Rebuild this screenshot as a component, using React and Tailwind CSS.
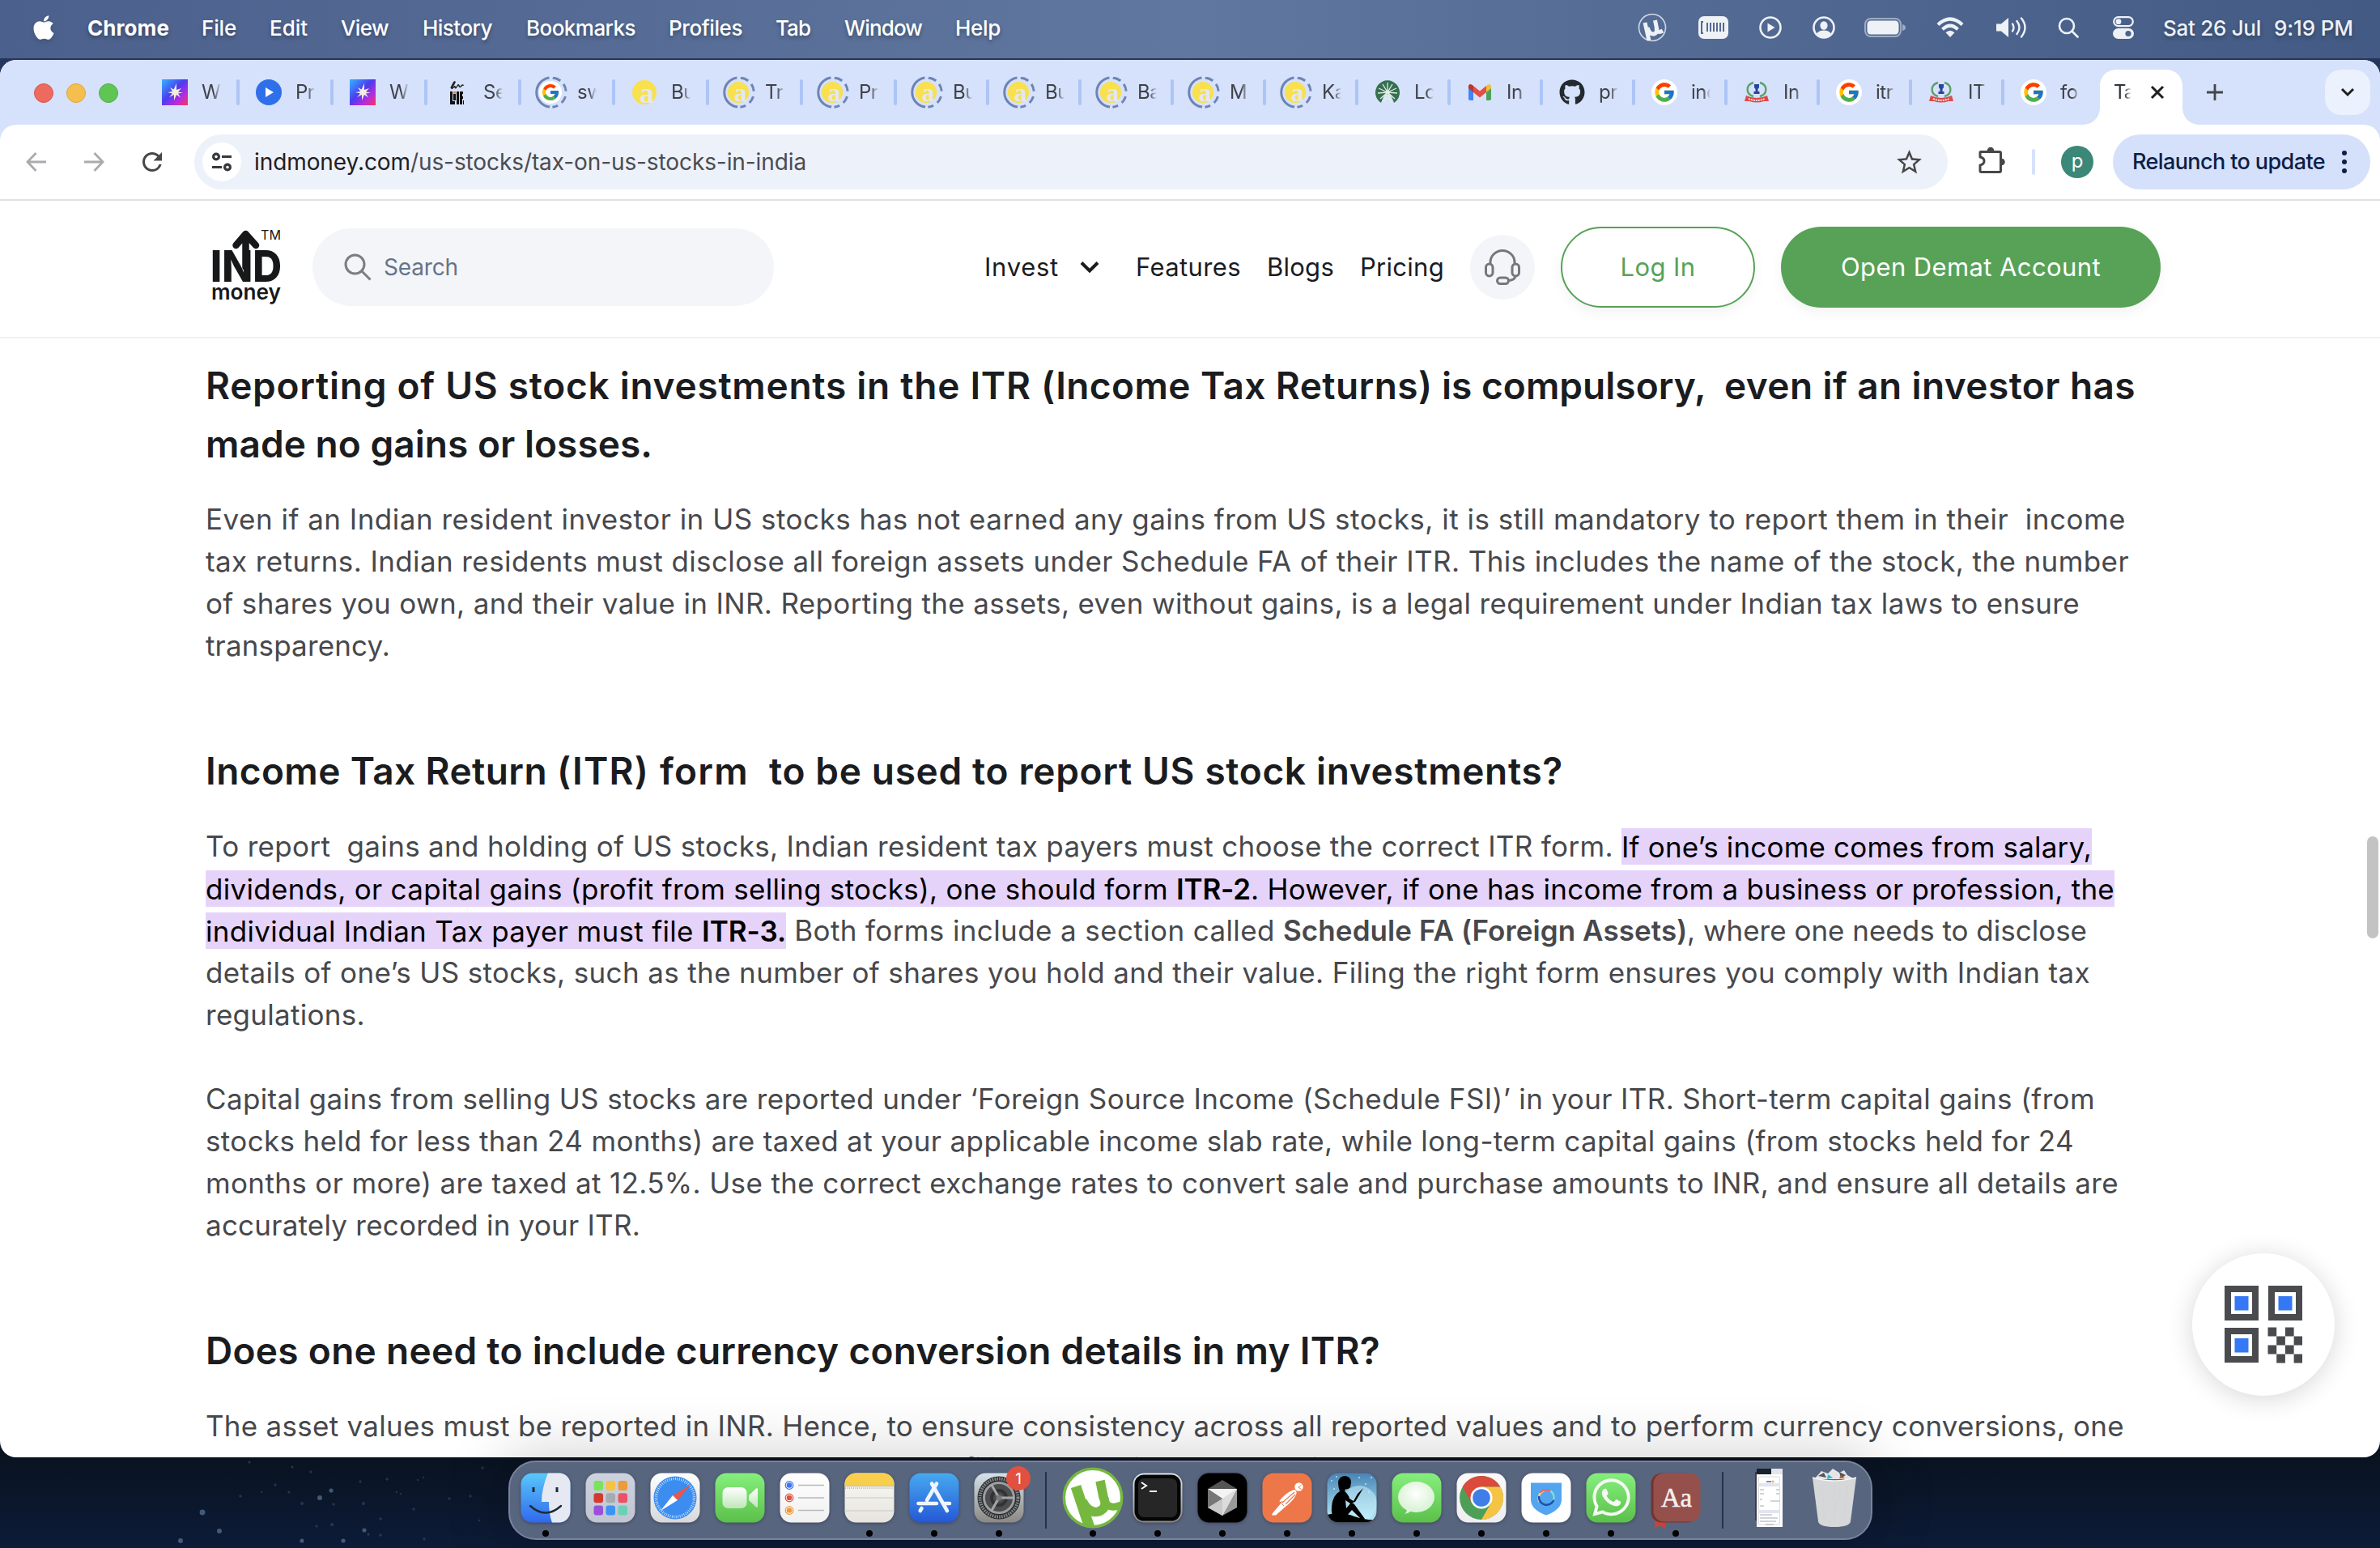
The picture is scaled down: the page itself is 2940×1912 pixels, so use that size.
import React, { useLayoutEffect, useRef } from "react";
import { FaApple, FaGithub, FaWhatsapp } from "react-icons/fa";
import { FcGoogle } from "react-icons/fc";
import { MdStarOutline, MdRefresh } from "react-icons/md";

/* A single run of text tracked so that it fills exactly w pixels. */
function Fit({ w, className = "", children }) {
  const ref = useRef(null);
  useLayoutEffect(() => {
    const el = ref.current;
    el.style.letterSpacing = "0px";
    const natural = el.getBoundingClientRect().width;
    const n = el.textContent.length;
    el.style.letterSpacing = (w - natural) / n + "px";
  }, [w]);
  return (
    <span className="inline-block whitespace-pre" style={{ width: w }}>
      <span ref={ref} className={className}>{children}</span>
    </span>
  );
}

/* ---------- menu bar ---------- */

const MENU = [
  ["File", 43, 40], ["Edit", 47, 41], ["View", 59, 41], ["History", 86, 42], ["Bookmarks", 135, 42],
  ["Profiles", 91, 41], ["Tab", 43, 41], ["Window", 96, 42], ["Help", 56, 41],
];

function MenuBar() {
  return (
    <div className="flex h-[72px] items-center bg-linear-to-r from-[#4b608c] via-[#60779f] to-[#425a84] pb-[4px] text-[26px] font-medium text-white [text-shadow:0_3px_5px_rgba(0,0,0,0.3)]">
      <FaApple className="ml-[38px] h-[34px] w-[32px] drop-shadow-md" />
      <span className="ml-[38px] flex font-bold"><Fit w={101}>Chrome</Fit></span>
      {MENU.map(([t, w, ml]) => (
        <span key={t} className="flex" style={{ marginLeft: ml }}><Fit w={w}>{t}</Fit></span>
      ))}
      <div className="ml-auto flex items-center text-[#eef1f6]">
        <svg className="h-[36px] w-[36px]" viewBox="0 0 36 36">
          <circle cx="18" cy="18" r="16.500" fill="none" stroke="currentColor" strokeOpacity="0.8" strokeWidth="1.600" />
          <path d="M9 12l5 22M12 18q3 9 8 8 5-1.500 3.500-7L21.500 9M23 19q1 7 8 3" fill="none" stroke="currentColor" strokeWidth="5" />
        </svg>
        <svg className="ml-[39px] h-[28px] w-[37px]" viewBox="0 0 37 28">
          <rect width="37" height="28" rx="7" fill="currentColor" />
          <g stroke="#56698f" strokeWidth="2" fill="none">
            <path d="M6 7H4v14h2M11 8v11M15 8v11M19 8v11M23 8v11M27 8v11M31 8v11" />
          </g>
        </svg>
        <svg className="ml-[38px] h-[28px] w-[28px]" viewBox="0 0 28 28">
          <circle cx="14" cy="14" r="12.500" fill="none" stroke="currentColor" strokeWidth="2.600" />
          <path d="M10.500 8.500v11l9-5.500z" fill="currentColor" />
        </svg>
        <svg className="ml-[38px] h-[28px] w-[28px]" viewBox="0 0 28 28">
          <circle cx="14" cy="14" r="12.500" fill="none" stroke="currentColor" strokeWidth="2.600" />
          <ellipse cx="14" cy="11.500" rx="4.600" ry="5.200" fill="currentColor" />
          <path d="M5 22q2-4.500 9-4.500t9 4.500q-4 4.500-9 4.500t-9-4.500z" fill="currentColor" />
        </svg>
        <svg className="ml-[36px] h-[24px] w-[51px]" viewBox="0 0 51 24">
          <rect x="1" y="1" width="44" height="22" rx="7" fill="none" stroke="currentColor" strokeOpacity="0.5" strokeWidth="2" />
          <rect x="3.500" y="3.500" width="39" height="17" rx="4.500" fill="currentColor" />
          <path d="M47 8q4 1 4 4t-4 4z" fill="currentColor" fillOpacity="0.5" />
        </svg>
        <svg className="ml-[38px] h-[26px] w-[34px]" viewBox="0 0 34 26" fill="none" stroke="currentColor" strokeWidth="4.200">
          <path d="M2 9.500q15-14 30 0" />
          <path d="M7.500 15.200q9.500-9 19 0" />
          <path d="M17 25l-5.500-5.800q5.500-5 11 0z" fill="currentColor" stroke="none" />
        </svg>
        <svg className="ml-[40px] h-[28px] w-[39px]" viewBox="0 0 39 28" fill="none" stroke="currentColor" strokeWidth="2.400" strokeLinecap="round">
          <path d="M0 9.500h6L15 2v24l-9-7.500H0z" fill="currentColor" stroke="none" />
          <path d="M20 9.500q3 4.500 0 9M25.500 6q6 8 0 16M31 2.500q9 11.500 0 23" />
        </svg>
        <svg className="ml-[37px] h-[26px] w-[26px]" viewBox="0 0 26 26" fill="none" stroke="currentColor" strokeWidth="2.600" strokeLinecap="round">
          <circle cx="11" cy="11" r="9" />
          <path d="M17.500 17.500l7 7" />
        </svg>
        <svg className="ml-[42px] h-[28px] w-[26px]" viewBox="0 0 26 28">
          <rect x="1.200" y="1.200" width="23.600" height="11" rx="5.500" fill="none" stroke="currentColor" strokeWidth="2.200" />
          <circle cx="7" cy="6.700" r="3.400" fill="currentColor" />
          <rect y="15" width="26" height="13" rx="6.500" fill="currentColor" />
          <circle cx="19" cy="21.500" r="3.600" fill="#4c638d" />
        </svg>
        <span className="ml-[36px] flex"><Fit w={121}>Sat 26 Jul</Fit></span>
        <span className="ml-[16px] mr-[33px] flex"><Fit w={98}>9:19 PM</Fit></span>
      </div>
    </div>
  );
}

/* ---------- tab strip ---------- */

const Star = () => (
  <svg viewBox="0 0 32 32" className="h-[32px] w-[32px]">
    <defs>
      <linearGradient id="ws" x1="0" y1="0" x2="1" y2="1">
        <stop offset="0" stopColor="#35b5ff" /><stop offset="0.450" stopColor="#4a3df0" /><stop offset="0.720" stopColor="#b32be0" /><stop offset="1" stopColor="#ff3355" />
      </linearGradient>
    </defs>
    <rect width="32" height="32" fill="url(#ws)" />
    <path d="M18 5l0 8 6-2-4 4.500 6 1-6 1 3 5-5-3.500-3 7-0-7-6 3 4-4.500-6-1.500 6-1-3-5 4.500 2.500z" fill="#f3ece4" />
  </svg>
);
const Play = () => (
  <svg viewBox="0 0 32 32" className="h-[32px] w-[32px]">
    <circle cx="16" cy="16" r="16" fill="#2f6fea" /><path d="M12 10v12l10-6z" fill="#fff" />
  </svg>
);
const Life = () => (
  <svg viewBox="0 0 32 32" className="h-[32px] w-[32px]">
    <path d="M9 11q4-9 5-8c1 1-4 6-4 8s4-4 4-2 1 3 3-1 2 3 4 1 3-3 3-1" fill="none" stroke="#222" strokeWidth="1.500" />
    <path d="M8 15h3v12h3v4H8zM12 18h3v8h-3zM16 15h3v16h-3zM20 15h4v3h-1v3h1v3h-1v7h-3zM24 26h1v5h-1z" fill="#111" />
    <rect x="12" y="15" width="3" height="2.500" fill="#e8793a" />
  </svg>
);
const Yellow = ({ small }) => (
  <svg viewBox="0 0 32 32" className={small ? "h-[28px] w-[28px]" : "h-[32px] w-[32px]"}>
    <circle cx="16" cy="16" r="15" fill="#f8e04e" />
    <text x="10" y="29" fontSize="36" fontWeight="700" fontFamily="Liberation Serif" fill="#e3e8ee">a</text>
  </svg>
);
const Ring = ({ children }) => (
  <div className="relative flex h-[32px] w-[32px] items-center justify-center">
    {children}
    <svg viewBox="0 0 40 40" className="absolute -left-[3px] -top-[4px] h-[40px] w-[40px]">
      <circle cx="20" cy="20" r="18.200" fill="none" stroke="#6d84b4" strokeWidth="3" pathLength="100" strokeDasharray="46 4 9 5 8 6 8 5 6 3" transform="rotate(96 20 20)" />
    </svg>
  </div>
);
const G = ({ small }) => (
  <div className={small ? "flex h-[28px] w-[28px] items-center justify-center rounded-full bg-white" : "flex h-[32px] w-[32px] items-center justify-center rounded-full bg-white"}>
    <FcGoogle className={small ? "h-[24px] w-[24px]" : "h-[28px] w-[28px]"} />
  </div>
);
const Leaf = () => (
  <svg viewBox="0 0 32 32" className="h-[32px] w-[32px]">
    <path d="M8 29A15 15 0 1 1 24 29L20 19h-8z" fill="#35704f" />
    <g stroke="#dfeee6" strokeWidth="1.300">
      <path d="M16 16V4M16 16L10 6M16 16L22 6M16 16L5 11M16 16L27 11M16 16L4 17M16 16L28 17M16 16L7 24M16 16L25 24M13 24h6M16 16l-5 13M16 16l5 13" />
    </g>
  </svg>
);
const Gmail = () => (
  <svg viewBox="0 0 32 32" className="h-[32px] w-[32px]">
    <path d="M2 8v16a2 2 0 0 0 2 2h4V13z" fill="#4285f4" />
    <path d="M30 8v16a2 2 0 0 1-2 2h-4V13z" fill="#4ba35a" />
    <path d="M24 8l2-1.600q4-1.400 4 3V11l-6 5z" fill="#f5bd42" />
    <path d="M8 8L6 6.400q-4-1.400-4 3V11l6 5z" fill="#b8372b" />
    <path d="M8 8l8 6.500L24 8v8l-8 6.500L8 16z" fill="#e34f42" />
  </svg>
);
const Emblem = () => (
  <svg viewBox="0 0 32 32" className="h-[32px] w-[32px]">
    <path d="M12 4a11 9 0 0 0 0 17M20 4a11 9 0 0 1 0 17" fill="none" stroke="#5da06a" strokeWidth="2.400" />
    <path d="M13 6h6v4l-1.500 2v3h2v3h-7v-3h2v-3L13 10z" fill="#27479b" />
    <path d="M3 20q13 6 26 0l2 7H25q-9 3-18 0H1z" fill="#dc4b49" />
    <path d="M6 24q10 4 20 0" fill="none" stroke="#fff" strokeWidth="1.600" strokeDasharray="2 1" />
  </svg>
);
const RY = () => <Ring><Yellow small /></Ring>;

const TABS = [
  [Star, "W", 116], [Play, "Pr", 116], [Star, "W", 116], [Life, "Se", 116], [() => <Ring><G small /></Ring>, "sw", 116],
  [Yellow, "Bu", 116], [RY, "Tra", 116], [RY, "Pr", 116], [RY, "Bu", 114], [RY, "Bu", 114], [RY, "Ba", 114], [RY, "M", 114],
  [RY, "Ka", 114], [Leaf, "Lo", 114], [Gmail, "In", 114], [() => <FaGithub className="h-[32px] w-[32px] text-[#24292f]" />, "pr", 114],
  [G, "inc", 114], [Emblem, "In", 114], [G, "itr", 114], [Emblem, "IT", 114], [G, "fo", 100],
];

function TabStrip() {
  return (
    <div className="flex h-[80px] bg-[#d6e1fb]">
      <div className="flex h-[82px] w-[178px] items-center gap-[16px] pl-[42px]">
        <i className="h-[24px] w-[24px] rounded-full border border-[#d9574c] bg-[#ed6a5e]" />
        <i className="h-[24px] w-[24px] rounded-full border border-[#dfa63e] bg-[#f5bf4f]" />
        <i className="h-[24px] w-[24px] rounded-full border border-[#53ad46] bg-[#61c554]" />
      </div>
      {TABS.map(([Icon, label, w], i) => (
        <div key={i} className="flex h-[80px] shrink-0 items-center" style={{ width: w }}>
          <div className="w-[32px] shrink-0 ml-[22px]"><Icon /></div>
          <div className="ml-[17px] w-[24px] overflow-hidden whitespace-nowrap text-[24px] tracking-[-0.5px] text-[#3f4248] [mask-image:linear-gradient(to_right,black_60%,transparent)]">{label}</div>
          {i < 20 && <i className="ml-auto mr-[-2px] h-[32px] w-[4px] rounded-full bg-[#adc5f5]" />}
        </div>
      ))}
      <div className="mt-[12px] flex h-[68px] shrink-0 items-end">
        <div className="h-[20px] w-[20px] bg-[radial-gradient(circle_at_0_0,transparent_19.500px,#fff_20px)]" />
        <div className="flex h-[68px] w-[102px] items-center rounded-t-[20px] bg-white pb-[12px]">
          <span className="ml-[17px] w-[22px] overflow-hidden whitespace-nowrap text-[24px] tracking-[-1px] text-[#2f3238] [mask-image:linear-gradient(to_right,black_60%,transparent)]">Tax</span>
          <svg className="ml-[23px] h-[18px] w-[18px]" viewBox="0 0 18 18" stroke="#1f2023" strokeWidth="3"><path d="M2 2l14 14M16 2L2 16" /></svg>
        </div>
        <div className="h-[20px] w-[20px] bg-[radial-gradient(circle_at_100%_0,transparent_19.500px,#fff_20px)]" />
      </div>
      <svg className="ml-[9px] mt-[29px] h-[22px] w-[22px] shrink-0" viewBox="0 0 22 22" stroke="#43464c" strokeWidth="2.800"><path d="M11 1v20M1 11h20" /></svg>
      <div className="ml-auto mr-[12px] mt-[12px] flex h-[56px] w-[56px] shrink-0 items-center justify-center rounded-[20px] bg-[#ebf1fd]">
        <svg className="h-[12px] w-[18px]" viewBox="0 0 18 12" fill="none" stroke="#1f2023" strokeWidth="3"><path d="M2 2l7 7 7-7" /></svg>
      </div>
    </div>
  );
}

function Toolbar() {
  return (
    <div className="bg-[#d6e1fb]">
      <div className="flex h-[94px] items-center rounded-t-[20px] border-b-2 border-[#e1e1e1] bg-white">
        <svg className="ml-[32px] h-[26px] w-[26px]" viewBox="0 0 26 26" fill="none" stroke="#a9abae" strokeWidth="2.800"><path d="M12.500 2L2 13l10.500 11M2 13h23" /></svg>
        <svg className="ml-[45px] h-[26px] w-[26px]" viewBox="0 0 26 26" fill="none" stroke="#a9abae" strokeWidth="2.800"><path d="M13.500 2L24 13 13.500 24M24 13H1" /></svg>
        <MdRefresh className="ml-[41px] h-[36px] w-[36px] text-[#474747]" />
        <div className="ml-[34px] flex h-[68px] w-[2166px] items-center rounded-full bg-[#edf1fa] pl-[10px] text-[28px]">
          <div className="flex h-[48px] w-[48px] items-center justify-center rounded-full bg-white">
            <svg className="h-[24px] w-[26px]" viewBox="0 0 26 24" fill="none" stroke="#36383b" strokeWidth="3.200">
              <circle cx="6" cy="5.500" r="3.400" /><path d="M13 5.500h12M1 18.500h12" /><circle cx="20" cy="18.500" r="3.400" />
            </svg>
          </div>
          <span className="ml-[16px] flex text-[#1f2023]"><Fit w={193}>indmoney.com</Fit></span>
          <span className="flex text-[#4a4c50]"><Fit w={489}>/us-stocks/tax-on-us-stocks-in-india</Fit></span>
          <MdStarOutline className="ml-auto mr-[29px] h-[37px] w-[37px] text-[#474747]" />
        </div>
        <svg className="ml-[37px] mt-[-4px] h-[34px] w-[34px]" viewBox="0 0 34 34" fill="none" stroke="#474747" strokeWidth="3" strokeLinejoin="round">
          <path d="M3.500 6.500H27a1.500 1.500 0 0 1 1.500 1.500v22a1.500 1.500 0 0 1-1.500 1.500H4.500A1.500 1.500 0 0 1 3 30v-7q5-1 5-5t-5-5V7z" />
          <path d="M12 6a4.500 4.500 0 0 1 8 0zM29 15a4.500 4.500 0 0 1 0 8z" fill="#474747" stroke="none" />
          <path d="M12.500 5a3.500 3.500 0 0 1 7 0zM29.500 15.500a3.500 3.500 0 0 1 0 7z" fill="#474747" stroke="#474747" strokeWidth="1.500" />
        </svg>
        <i className="ml-[33px] h-[32px] w-[4px] rounded-full bg-[#d6e1fb]" />
        <div className="ml-[32px] flex h-[40px] w-[40px] items-center justify-center rounded-full bg-[#3b8778] pb-[3px] text-[24px] text-white">p</div>
        <div className="ml-auto mr-[12px] flex h-[68px] w-[318px] items-center rounded-full bg-[#d5e0fb] pl-[24px] text-[27px] font-medium text-[#0b2047]">
          <Fit w={238}>Relaunch to update</Fit>
          <svg className="ml-[21px] h-[28px] w-[6px]" viewBox="0 0 6 28" fill="#0b2047"><circle cx="3" cy="3" r="3" /><circle cx="3" cy="14" r="3" /><circle cx="3" cy="25" r="3" /></svg>
        </div>
      </div>
    </div>
  );
}

/* ---------- web page ---------- */

function SiteHeader() {
  return (
    <header className="flex h-[170px] items-center border-b-2 border-[#f0f0f1] pb-[4px] text-[31px] text-[#1b1c1f]">
      <svg className="ml-[260px] h-[96px] w-[90px]" viewBox="260 282 90 96" fill="#17181a">
        <text x="260" y="348" fontSize="54" fontWeight="800" fontFamily="Inter" textLength="88" lengthAdjust="spacingAndGlyphs">IND</text>
        <path d="M303.500 330V290M291.500 303L303.500 289l12.500 14" fill="none" stroke="#17181a" strokeWidth="8.500" strokeLinecap="round" strokeLinejoin="round" />
        <text x="261" y="370" fontSize="26" fontWeight="600" fontFamily="Inter" textLength="86" lengthAdjust="spacingAndGlyphs">money</text>
        <text x="322" y="296" fontSize="16" fontFamily="Inter" textLength="25" lengthAdjust="spacingAndGlyphs">TM</text>
      </svg>
      <div className="ml-[36px] flex h-[96px] w-[570px] items-center rounded-full bg-[#f4f5f8] pl-[39px] text-[28px] text-[#64748b]">
        <svg className="h-[34px] w-[34px]" viewBox="0 0 34 34" fill="none" stroke="#7b7d80" strokeWidth="3"><circle cx="13.500" cy="13.500" r="11.500" /><path d="M21.500 21.500L32.500 32.500" /></svg>
        <span className="ml-[15px] flex"><Fit w={92}>Search</Fit></span>
      </div>
      <nav className="ml-[260px] flex items-center">
        <Fit w={92}>Invest</Fit>
        <svg className="ml-[26px] h-[16px] w-[24px]" viewBox="0 0 24 16" fill="none" stroke="#1b1c1f" strokeWidth="4"><path d="M2 2.500l10 10 10-10" /></svg>
        <span className="ml-[45px] flex"><Fit w={130}>Features</Fit></span>
        <span className="ml-[32px] flex"><Fit w={83}>Blogs</Fit></span>
        <span className="ml-[32px] flex"><Fit w={104}>Pricing</Fit></span>
      </nav>
      <div className="ml-[32px] flex h-[80px] w-[80px] items-center justify-center rounded-full bg-[#f4f5f8]">
        <svg className="h-[44px] w-[46px]" viewBox="0 0 46 44" fill="none" stroke="#75787b" strokeWidth="3">
          <path d="M8 18v-2a15 14.500 0 0 1 30 0v2" />
          <rect x="2.500" y="18" width="8.500" height="15" rx="4.200" />
          <rect x="35" y="18" width="8.500" height="15" rx="4.200" />
          <path d="M39 33q-1 5-8 5.500" /><rect x="16.500" y="35" width="14" height="7.500" rx="3.700" />
        </svg>
      </div>
      <div className="ml-[32px] flex h-[100px] w-[240px] items-center justify-center rounded-full border-[2.500px] border-[#57a257] bg-white text-[#57a257] shadow-[0_6px_16px_rgba(0,0,0,0.050)]">
        <Fit w={93}>Log In</Fit>
      </div>
      <div className="ml-[32px] flex h-[100px] w-[469px] items-center justify-center rounded-full bg-[#57a257] text-white shadow-[0_6px_16px_rgba(0,0,0,0.050)]">
        <Fit w={321}>Open Demat Account</Fit>
      </div>
    </header>
  );
}

const H = ({ children, className }) => (
  <h2 className={`flex flex-col text-[46px] font-semibold leading-[72px] text-[#1b1c1f] ${className}`}>{children}</h2>
);
const P = ({ children, className }) => (
  <p className={`flex flex-col text-[35px] font-[430] leading-[52px] text-[#47484c] ${className}`}>{children}</p>
);
const HL = "bg-[#e6d3fa] py-[1.5px] text-black";

function Article() {
  return (
    <article className="flex flex-col pl-[254px] pt-[22px]">
      <H>
        <span className="flex">
          <Fit w={1032}>{"Reporting of US stock investments in the ITR "}</Fit>
          <Fit w={495}>{"(Income Tax Returns) "}</Fit>
          <Fit w={349}>{"is compulsory,  "}</Fit>
          <Fit w={508}>even if an investor has</Fit>
        </span>
        <Fit w={552}>made no gains or losses.</Fit>
      </H>
      <P className="mt-[31px]">
        <Fit w={2372}>{"Even if an Indian resident investor in US stocks has not earned any gains from US stocks, it is still mandatory to report them in their  income"}</Fit>
        <Fit w={2376}>tax returns. Indian residents must disclose all foreign assets under Schedule FA of their ITR. This includes the name of the stock, the number</Fit>
        <Fit w={2315}>of shares you own, and their value in INR. Reporting the assets, even without gains, is a legal requirement under Indian tax laws to ensure</Fit>
        <Fit w={228}>transparency.</Fit>
      </P>
      <H className="mt-[93px]">
        <span className="flex">
          <Fit w={434}>{"Income Tax Return "}</Fit>
          <Fit w={262}>{"(ITR) form  "}</Fit>
          <Fit w={981}>to be used to report US stock investments?</Fit>
        </span>
      </H>
      <P className="mt-[31px]">
        <span className="flex">
          <Fit w={1749}>{"To report  gains and holding of US stocks, Indian resident tax payers must choose the correct ITR form. "}</Fit>
          <Fit w={581} className={HL}>If one’s income comes from salary,</Fit>
        </span>
        <span className="flex">
          <Fit w={1199} className={HL}>{"dividends, or capital gains (profit from selling stocks), one should form "}</Fit>
          <Fit w={92} className={HL + " font-semibold"}>ITR-2</Fit>
          <Fit w={1067} className={HL}>. However, if one has income from a business or profession, the</Fit>
        </span>
        <span className="flex">
          <Fit w={613} className={HL}>{"individual Indian Tax payer must file "}</Fit>
          <Fit w={104} className={HL + " font-semibold"}>ITR-3.</Fit>
          <Fit w={614}>{" Both forms include a section called "}</Fit>
          <Fit w={499} className="font-semibold">Schedule FA (Foreign Assets)</Fit>
          <Fit w={494}>, where one needs to disclose</Fit>
        </span>
        <Fit w={2328}>details of one’s US stocks, such as the number of shares you hold and their value. Filing the right form ensures you comply with Indian tax</Fit>
        <Fit w={197}>regulations.</Fit>
      </P>
      <P className="mt-[52px]">
        <Fit w={2334}>Capital gains from selling US stocks are reported under ‘Foreign Source Income (Schedule FSI)’ in your ITR. Short-term capital gains (from</Fit>
        <Fit w={2308}>stocks held for less than 24 months) are taxed at your applicable income slab rate, while long-term capital gains (from stocks held for 24</Fit>
        <Fit w={2363}>months or more) are taxed at 12.5%. Use the correct exchange rates to convert sale and purchase amounts to INR, and ensure all details are</Fit>
        <Fit w={537}>accurately recorded in your ITR.</Fit>
      </P>
      <H className="mt-[93px]">
        <Fit w={1451}>Does one need to include currency conversion details in my ITR?</Fit>
      </H>
      <P className="mt-[31px]">
        <Fit w={2370}>The asset values must be reported in INR. Hence, to ensure consistency across all reported values and to perform currency conversions, one</Fit>
        <Fit w={1570}>needs to use the same exchange rate throughout when filing according to the Indian tax rules</Fit>
      </P>
    </article>
  );
}

function QrButton() {
  const cells = [[0, 0], [2, 0], [1, 1], [3, 1], [0, 2], [2, 2], [1, 3], [3, 3]];
  return (
    <div className="absolute left-[2708px] top-[1474px] flex h-[176px] w-[176px] items-center justify-center rounded-full bg-white shadow-[0_4px_32px_rgba(0,0,0,0.160)]">
      <svg className="h-[96px] w-[96px]" viewBox="0 0 96 96">
        {[[0, 0], [54, 0], [0, 52]].map(([x, y]) => (
          <g key={x + "-" + y} transform={`translate(${x} ${y})`}>
            <rect x="4" y="4" width="34" height="35" fill="#fff" stroke="#4a4b4f" strokeWidth="8" />
            <rect x="12.500" y="13" width="17" height="17.500" fill="#3478f6" />
          </g>
        ))}
        {cells.map(([x, y]) => <rect key={x + "," + y} x={53.5 + x * 10.7} y={51.5 + y * 11} width="10.700" height="11" fill="#4a4b4f" />)}
      </svg>
    </div>
  );
}

/* ---------- dock ---------- */

const Tile = ({ id, from, to, children }) => (
  <svg viewBox="0 0 62 62" className="h-[62px] w-[62px] drop-shadow-[0_1px_2px_rgba(0,0,0,0.3)]">
    <defs>
      <linearGradient id={id} x1="0" y1="0" x2="0" y2="1"><stop offset="0" stopColor={from} /><stop offset="1" stopColor={to} /></linearGradient>
      <clipPath id={id + "c"}><rect x="0.500" y="0.500" width="61" height="61" rx="14" /></clipPath>
    </defs>
    <g clipPath={`url(#${id}c)`}>
      <rect width="62" height="62" fill={`url(#${id})`} />
      {children}
    </g>
  </svg>
);

const Finder = () => (
  <Tile id="fi" from="#5ac8fa" to="#3068ec">
    <path d="M34 0Q26 20 26 36h9q0 14 4 26h23V0z" fill="#e6e9f1" />
    <path d="M16 18v6M45 18v6" stroke="#1d2b3a" strokeWidth="3" />
    <path d="M12 41q19 17 38 0" fill="none" stroke="#1d2b3a" strokeWidth="2.400" strokeLinecap="round" />
  </Tile>
);
const Launchpad = () => (
  <Tile id="lp" from="#ccd2de" to="#c0c5d1">
    {["#7ae25c", "#f5c343", "#ec9b3b", "#d23a2e", "#a5abb0", "#ea5268", "#9a50d8", "#3c93f4", "#6cd0b4"].map((c, i) => (
      <rect key={i} x={10.5 + (i % 3) * 15} y={10 + Math.floor(i / 3) * 15.3} width="11.500" height="12" rx="3" fill={c} />
    ))}
  </Tile>
);
const Safari = () => (
  <Tile id="sf" from="#ffffff" to="#d8d8da">
    <circle cx="31" cy="31" r="26.500" fill="#3b8df0" />
    <circle cx="31" cy="31" r="23.500" fill="none" stroke="#d7eaff" strokeWidth="3.500" strokeDasharray="0.800 1.700" />
    <path d="M50 15L28 28l6 6z" fill="#ea5545" /><path d="M13 47l15-19 6 6z" fill="#fff" />
  </Tile>
);
const FaceTime = () => (
  <Tile id="ft" from="#86ef7d" to="#5bc04a">
    <defs><linearGradient id="ftg" x1="0" y1="0" x2="0" y2="1"><stop offset="0" stopColor="#fff" /><stop offset="1" stopColor="#bfe6b8" /></linearGradient></defs>
    <rect x="9.500" y="18" width="30" height="26" rx="7" fill="url(#ftg)" /><path d="M42 28l9-8.500q2-1 2 1v21q0 2-2 1l-9-8.500z" fill="url(#ftg)" />
  </Tile>
);
const Reminders = () => (
  <Tile id="rm" from="#ffffff" to="#f1f0f1">
    {["#3a76f0", "#e2503f", "#ea9a3c"].map((c, i) => (
      <g key={c}>
        <circle cx="12" cy={15.500 + i * 15.500} r="4.800" fill="#fff" stroke={c} strokeWidth="1.200" /><circle cx="12" cy={15.500 + i * 15.500} r="3.300" fill={c} />
        <path d={`M23 ${15.500 + i * 15.500}h32`} stroke="#b9b9bc" strokeWidth="1.500" />
      </g>
    ))}
  </Tile>
);
const Notes = () => (
  <Tile id="nt" from="#faf9f5" to="#e6e4dd">
    <rect width="62" height="16" fill="#f7cf4c" /><path d="M0 16.500h62" stroke="#c8b88a" />
    <path d="M1 19h60" stroke="#aaa" strokeWidth="1.500" strokeDasharray="1 1.500" /><path d="M0 31h62M0 47h62" stroke="#cbc9c3" />
  </Tile>
);
const AppStore = () => (
  <Tile id="as" from="#47aaf0" to="#2557d6">
    <g stroke="#eef5ff" strokeWidth="4.600" strokeLinecap="round">
      <path d="M34 13.500L22 34M28 13.500L47 47M11.500 38H34M43 38h7M15.500 44l-1.800 3" />
    </g>
  </Tile>
);
const Settings = () => (
  <Tile id="se" from="#d5e3ea" to="#8b8783">
    <circle cx="31" cy="31" r="26.500" fill="#2a2b2c" />
    <circle cx="31" cy="31" r="23.500" fill="none" stroke="#85888a" strokeWidth="4" strokeDasharray="1.700 1.200" />
    <circle cx="31" cy="31" r="18.500" fill="#4c4d4e" stroke="#9b9da0" strokeWidth="3" />
    <circle cx="31" cy="31" r="9" fill="none" stroke="#333" strokeWidth="4" />
    <path d="M31 31h19M31 31L21.500 14.500M31 31l-9.500 16.500" stroke="#a5a7a9" strokeWidth="3" />
    <circle cx="31" cy="31" r="3.500" fill="#77797b" />
  </Tile>
);
const UTorrent = () => (
  <svg viewBox="0 0 76 76" className="h-[76px] w-[76px] shrink-0">
    <circle cx="38" cy="38" r="35.700" fill="#fff" stroke="#76b83f" strokeWidth="3.500" />
    <clipPath id="utc"><circle cx="38" cy="38" r="36" /></clipPath>
    <g clipPath="url(#utc)" fill="none" stroke="#76b83f">
      <path d="M17 24L35 78" strokeWidth="13" />
      <path d="M25 42q8 16 20 13 12-4 6-18L47 17" strokeWidth="11.500" />
      <path d="M53 43q6 10 20 4" strokeWidth="9" />
    </g>
  </svg>
);
const Terminal = () => (
  <Tile id="te" from="#dbe9ef" to="#8b8786">
    <rect x="2.500" y="2.500" width="57" height="57" rx="11.500" fill="#050505" /><rect x="7" y="7" width="48" height="48" rx="7" fill="#262626" />
    <path d="M11 12l6 4-6 4" fill="none" stroke="#fff" strokeWidth="2" /><path d="M21 23h9" stroke="#fff" strokeWidth="2" />
  </Tile>
);
const Cursor = () => (
  <Tile id="cu" from="#000000" to="#000000">
    <path d="M31 9l18 11H13z" fill="#555" /><path d="M13 20v23l18-11z" fill="#777" /><path d="M49 20v23l-18 10-18-10 18-11z" fill="#9a9a9a" />
    <path d="M31 32v21L13 43z" fill="#c9c9c9" /><path d="M13 20h36L31 53V32z" fill="#f3f3f3" /><path d="M31 32l18-12L31 53z" fill="#dcdcdc" />
  </Tile>
);
const Postman = () => (
  <Tile id="pm" from="#ee774a" to="#ee774a">
    <circle cx="45.500" cy="17.500" r="5.200" fill="#fff" />
    <path d="M39 21q4 0 3.500 5-3 8-13 15.500L17 52.500h-5l1-2.500 11-13 2-2-4 1-0.500-1q6-9 17.500-14z" fill="#fff" />
    <path d="M40 24L25 37M41 27L29 39" stroke="#ee774a" strokeWidth="1.200" />
    <path d="M45 18l3.500-3M45 18l3.500 2.500M24 38l3 3" stroke="#ee774a" strokeWidth="1" />
  </Tile>
);
const Kindle = () => (
  <Tile id="ki" from="#4784b5" to="#b9effb">
    <circle cx="40" cy="38" r="22" fill="#cdf4fd" opacity="0.500" />
    {[[6, 10], [12, 5], [40, 6], [48, 14], [55, 6], [52, 24], [9, 20]].map(([x, y]) => <circle key={x} cx={x} cy={y} r="0.900" fill="#cfe6f5" />)}
    <path d="M0 52q18-5 34 2 14 5 28 4v4H0z" fill="#000" />
    <path d="M14 12q1-8 9-8 7 1 7 8l-1 6q-3 3-6 2l-1 3q5 4 6 9l5 3 5-9 7-7-4 7-6 10-6 2-6-4 1 10 5-6q3-2 5 1l13 18H42L31 46l-8 9H9q-4-3-3-13 1-14 10-19-2-5-2-11z" fill="#000" />
  </Tile>
);
const Messages = () => (
  <Tile id="ms" from="#86ef7d" to="#5bc04a">
    <defs><radialGradient id="msg" cx="0.500" cy="0.400"><stop offset="0" stopColor="#fff" /><stop offset="1" stopColor="#ddf3d8" /></radialGradient></defs>
    <ellipse cx="30.500" cy="30" rx="22.500" ry="19" fill="url(#msg)" /><path d="M19 44q0 5-3 7 6-1 9-5z" fill="#e0f3db" />
  </Tile>
);
const Chrome = () => (
  <Tile id="ch" from="#fafafa" to="#eeeef0">
    <circle cx="31" cy="31" r="27" fill="#4f9e58" />
    <path d="M7.600 17.500A27 27 0 0 1 54.400 17.500H31L19.300 37.700z" fill="#db4a3b" />
    <path d="M54.400 17.500A27 27 0 0 1 31 58L42.700 37.700 31 17.500z" fill="#f6c445" />
    <circle cx="31" cy="31" r="13.500" fill="#fff" /><circle cx="31" cy="31" r="10.800" fill="#3f7de8" />
  </Tile>
);
const Shield = () => (
  <Tile id="sh" from="#ffffff" to="#ffffff">
    <path d="M12 12.500h38v21q0 12-19 19-19-7-19-19z" fill="#53a5f0" />
    <g fill="none" strokeWidth="2.400" strokeLinecap="round">
      <path d="M22 35a10 10 0 0 1 6-12.500" stroke="#f0d980" />
      <path d="M24 24a10 10 0 0 1 12-1.500" stroke="#e9686c" />
      <path d="M37 23a10 10 0 0 1 2.500 12" stroke="#7fe0d2" />
      <path d="M22 30a9.500 9.500 0 0 0 18 4.500" stroke="#1f4fa8" />
    </g>
  </Tile>
);
const WhatsApp = () => (
  <Tile id="wa" from="#86ef7d" to="#5bc04a"><FaWhatsapp x="5" y="4" size={53} color="#f5f8f4" /></Tile>
);
const Dictionary = () => (
  <svg viewBox="0 0 62 70" className="mt-[8px] h-[70px] w-[62px]">
    <path d="M5 56h13v13l-6.500-4L5 69z" fill="#c0463c" />
    <rect x="0.500" y="0.500" width="58" height="61" rx="13" fill="#75332f" /><rect x="3.500" y="0.500" width="58" height="60" rx="13" fill="#96504c" />
    <text x="32" y="41.500" textAnchor="middle" fontSize="33" fontFamily="Liberation Serif" fontWeight="400" stroke="#f5efee" strokeWidth="0.500" fill="#f5efee">Aa</text>
  </svg>
);
const Shots = () => (
  <svg viewBox="0 0 38 74" className="h-[74px] w-[38px]">
    <rect x="1" y="5" width="8" height="60" fill="#3a3d44" /><rect x="3" y="1" width="20" height="10" fill="#16222c" /><rect x="21" y="1" width="14" height="62" fill="#e3e5e8" />
    <rect x="3" y="8" width="32" height="65" fill="#fff" />
    <rect x="5.500" y="11" width="26" height="59" rx="1" fill="none" stroke="#cfd1d6" strokeWidth="0.800" />
    <rect x="5" y="19" width="27" height="4" fill="#e3e4ee" /><rect x="5" y="52" width="27" height="4" fill="#e3e4ee" />
    <path d="M15 17h6" stroke="#3763d4" strokeWidth="1.500" /><circle cx="23" cy="17" r="1.500" fill="#e9b93f" />
    <path d="M7 27h5M27 27h4M7 32h5M27 32h4M7 39h3M20 41h11M7 47h5M7 58h15M7 62h22M7 66h20M14 70h10" stroke="#a6a8ae" strokeWidth="1" />
  </svg>
);
const Trash = () => (
  <svg viewBox="0 0 56 74" className="h-[74px] w-[56px]">
    <path d="M3 14L12 4l8 3 6-6 8 5 6-3 4 6 9 5z" fill="#e5e5e5" />
    <path d="M8 10l7-4 3 6zM34 5l8 4-6 4z" fill="#50545a" /><path d="M20 8l6 4-7 2z" fill="#35b6d2" /><path d="M36 9l5 4h-7z" fill="#b4632e" />
    <path d="M1 12q27 8 54 0L48 66q-1 7-20 7T8 66z" fill="#dddedf" fillOpacity="0.940" />
    <path d="M1 12q27 8 54 0" fill="none" stroke="#f5f5f5" strokeWidth="1.500" />
    <path d="M12 22l4 42M28 22v44M44 22l-4 42M20 34l12 10M36 30l-8 20" stroke="#d4d5d7" strokeWidth="2" fill="none" />
  </svg>
);

const LEFT = [[Finder, 1], [Launchpad], [Safari], [FaceTime], [Reminders], [Notes, 1], [AppStore, 1], [Settings, 1, "1"]];
const RIGHT = [UTorrent, Terminal, Cursor, Postman, Kindle, Messages, Chrome, Shield, WhatsApp, Dictionary].map((c) => [c, 1]);

function DockItem({ Icon, running, badge }) {
  return (
    <div className="relative flex h-[94px] w-[80px] items-center justify-center pb-[6px]">
      <Icon />
      {running && <i className="absolute bottom-[2px] left-[36px] h-[8px] w-[8px] rounded-full bg-black" />}
      {badge && <span className="absolute right-[1px] top-[5px] flex h-[30px] w-[30px] items-center justify-center rounded-full bg-[#e2503f] text-[19px] leading-none text-white">{badge}</span>}
    </div>
  );
}

function Dock() {
  return (
    <div className="relative ml-[628px] mt-[4px] flex h-[98px] w-[1685px] shrink-0 items-start rounded-[34px] border-2 border-[#78839d] bg-[#58657f] pl-[4px] shadow-[0_0_70px_10px_rgba(0,0,0,0.180)]">
      {LEFT.map(([Icon, running, badge], i) => <DockItem key={i} Icon={Icon} running={running} badge={badge} />)}
      <div className="flex h-[94px] w-[36px] items-center justify-center"><i className="h-[70px] w-[2px] bg-[#26334f]" /></div>
      {RIGHT.map(([Icon, running], i) => <DockItem key={i} Icon={Icon} running={running} />)}
      <div className="flex h-[94px] w-[36px] items-center justify-center"><i className="h-[70px] w-[2px] bg-[#26334f]" /></div>
      <DockItem Icon={Shots} />
      <DockItem Icon={Trash} />
    </div>
  );
}

const STARS = [
  [308, 6, 2], [361, 12, 2], [384, 18, 2], [340, 34, 2], [357, 43, 2], [395, 50, 3.5], [409, 41, 3], [445, 30, 2], [478, 27, 2], [373, 57, 2.5],
  [412, 58, 2], [449, 57, 2.5], [297, 48, 2], [323, 43, 1.5], [250, 68, 4], [271, 91, 3.5], [223, 103, 3.5], [373, 103, 3], [424, 103, 3],
  [410, 83, 2.5], [391, 85, 2], [450, 90, 3], [455, 95, 2], [470, 96, 2], [511, 64, 2], [516, 28, 1.5], [523, 25, 1.5], [596, 13, 2], [581, 48, 2],
  [555, 51, 2], [592, 78, 1.5], [524, 101, 2], [470, 76, 2], [490, 43, 1.5], [495, 45, 1.5],
];

export default function App() {
  return (
    <div className="relative flex h-[1912px] w-[2940px] flex-col overflow-hidden bg-[#25365c] font-['Inter',sans-serif]">
      <div className="absolute left-0 top-[1700px] h-[212px] w-[2940px] bg-linear-to-b from-[#09121f] from-45% to-[#0d1b38]">
        <svg className="absolute left-0 top-[100px] h-[112px] w-[2940px]" viewBox="0 0 2940 112">
          {STARS.map(([x, y, r], i) => <circle key={i} cx={x} cy={y} r={r * 0.85} fill="#6f8fb5" opacity={r > 2.6 ? 0.55 : 0.25} />)}
        </svg>
      </div>
      <MenuBar />
      <div className="relative mt-[2px] h-[1726px] shrink-0 overflow-hidden rounded-[20px] bg-white">
        <TabStrip />
        <Toolbar />
        <SiteHeader />
        <Article />
        <i className="absolute left-[2924px] top-[959px] h-[126px] w-[14px] rounded-full bg-[#c3c3c3]" />
        <QrButton />
      </div>
      <Dock />
    </div>
  );
}
